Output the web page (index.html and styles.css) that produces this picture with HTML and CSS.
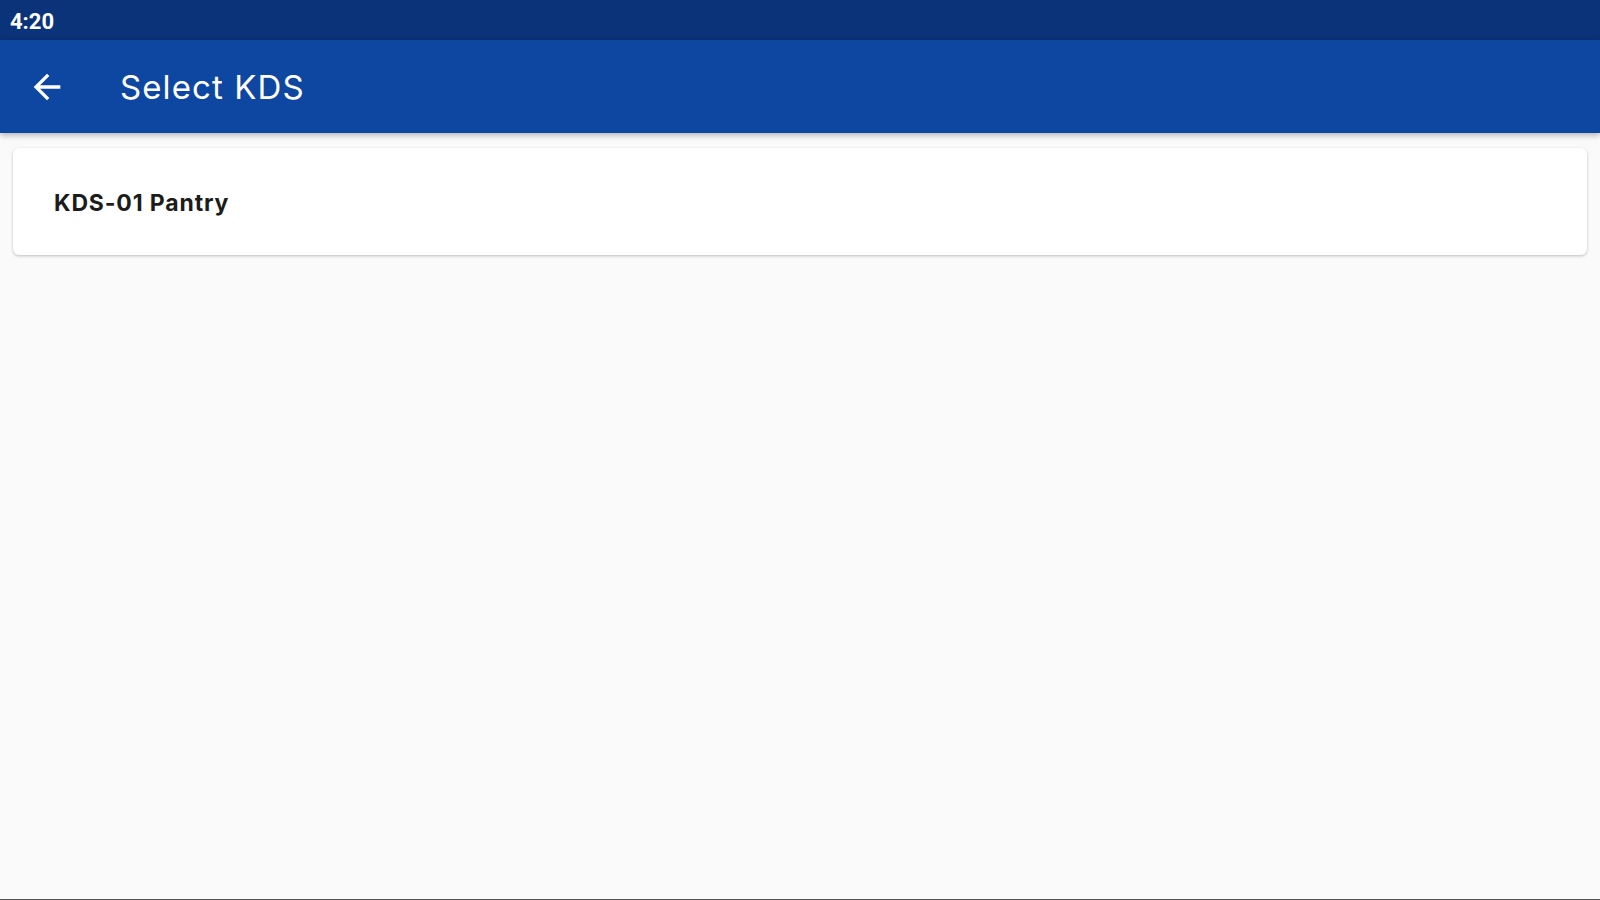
FILE: index.html
```html
<!DOCTYPE html>
<html lang="en">
<head>
    <meta charset="utf-8">
    <title>Select KDS</title>
    <meta name="viewport" content="width=device-width, initial-scale=1">
    <link rel="stylesheet" href="styles.css">
</head>
<body>
    <div class="status-bar">
        <span class="clock">4:20</span>
    </div>

    <header class="app-bar">
        <button class="back-button" aria-label="Back">
            <svg viewBox="0 0 24 24" width="40" height="40">
                <path d="M20 11H7.83l5.59-5.59L12 4l-8 8 8 8 1.41-1.41L7.83 13H20v-2z" fill="#fff"/>
            </svg>
        </button>
        <h1 class="title">Select KDS</h1>
    </header>

    <main class="content">
        <div class="kds-card">
            <span class="kds-name">KDS-01 Pantry</span>
        </div>
    </main>
</body>
</html>
```

FILE: styles.css
```css
html, body {
    height: 100%;
}
body {
    margin: 0;
    font-family: Inter, "Open Sans", sans-serif;
    background-color: #fafafa;
    color: #1c1c1c;
    display: flex;
    flex-direction: column;
    border-bottom: 1px solid #555;
    box-sizing: border-box;
}
.status-bar {
    height: 40px;
    background-color: #0b3379;
    display: flex;
    align-items: center;
    padding-left: 10px;
}
.clock {
    font-family: Roboto, sans-serif;
    font-weight: 700;
    font-size: 22px;
    color: #fff;
    padding-top: 2px;
}
.app-bar {
    height: 93px;
    background-color: #0d47a1;
    display: flex;
    align-items: center;
    box-shadow: 0 2px 6px rgba(0,0,0,0.3);
    position: relative;
    z-index: 1;
}
.back-button {
    background: none;
    border: none;
    padding: 0;
    margin-left: 27px;
    width: 40px;
    height: 40px;
    cursor: pointer;
}
.back-button svg {
    display: block;
}
.title {
    margin: 0 0 0 53px;
    font-size: 33px;
    font-weight: 400;
    color: #fff;
    letter-spacing: 1.1px;
}
.content {
    flex: 1;
    padding: 15px 13px;
}
.kds-card {
    background-color: #fff;
    border-radius: 6px;
    box-shadow: 0 1px 3px rgba(0,0,0,0.25);
    height: 107px;
    display: flex;
    align-items: center;
    padding-left: 41px;
}
.kds-name {
    font-size: 23px;
    font-weight: 700;
    letter-spacing: 0.85px;
    padding-top: 2px;
}
```
